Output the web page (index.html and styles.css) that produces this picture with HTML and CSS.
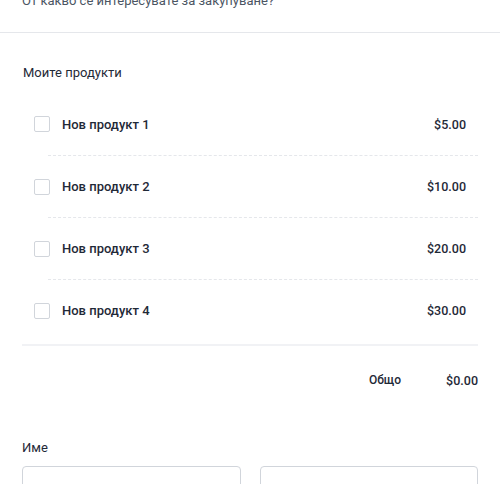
FILE: index.html
```html
<!DOCTYPE html>
<html lang="bg">
<head>
<meta charset="utf-8">
<link rel="stylesheet" href="styles.css">
</head>
<body>
<div class="header">
  <p class="subtitle">От какво се интересувате за закупуване?</p>
</div>
<main class="content">
  <h2 class="section-title">Моите продукти</h2>
  <ul class="products">
    <li class="product"><span class="check"></span><span class="name">Нов продукт 1</span><span class="price">$5.00</span></li>
    <li class="product"><span class="check"></span><span class="name">Нов продукт 2</span><span class="price">$10.00</span></li>
    <li class="product"><span class="check"></span><span class="name">Нов продукт 3</span><span class="price">$20.00</span></li>
    <li class="product"><span class="check"></span><span class="name">Нов продукт 4</span><span class="price">$30.00</span></li>
  </ul>
  <div class="total"><span class="total-label">Общо</span><span class="total-value">$0.00</span></div>
  <label class="field-label">Име</label>
  <div class="inputs">
    <div class="input"></div>
    <div class="input"></div>
  </div>
</main>
</body>
</html>
```
FILE: styles.css
```css
html, body {
  margin: 0;
  padding: 0;
  background: #ffffff;
  font-family: Roboto, "Noto Sans", sans-serif;
  color: #1f2937;
}
body { overflow: hidden; height: 484px; }
.header {
  border-bottom: 1px solid #e5e7eb;
  height: 32px;
  overflow: hidden;
}
.subtitle {
  margin: -9px 0 0 22px;
  font-size: 13px;
  line-height: 20px;
  color: #4b5563;
}
.content {
  padding: 0 22px;
}
.section-title {
  margin: 30px 0 0 1px;
  font-size: 13px;
  font-weight: 400;
  line-height: 20px;
  color: #1f2937;
}
.products {
  list-style: none;
  margin: 0;
  padding: 0 0 3px;
  margin-top: 10px;
  border-bottom: 2px solid #f1f2f5;
}
.product {
  display: flex;
  align-items: center;
  height: 62px;
  padding: 0 12px;
}
.product + .product {
  border-top: 1px dashed #e5e7eb;
  margin-left: 26px;
  padding-left: 0;
  height: 61px;
}
.check {
  width: 14px;
  height: 14px;
  border: 1px solid #d1d5db;
  border-radius: 2px;
  flex: none;
  margin-right: 12px;
}
.product + .product .check { margin-left: -14px; }
.name {
  font-size: 13px;
  font-weight: 500;
  flex: 1;
  color: #1f2937;
}
.price {
  font-size: 12.5px;
  font-weight: 500;
}
.total {
  display: flex;
  justify-content: flex-end;
  align-items: center;
  gap: 45px;
  height: 68px;
  font-size: 12px;
  font-weight: 500;
}
.total-value { font-size: 12.5px; }
.field-label {
  display: block;
  margin-top: 24px;
  font-size: 13px;
  line-height: 20px;
}
.inputs {
  display: grid;
  grid-template-columns: 1fr 1fr;
  gap: 19px;
  margin-top: 8px;
}
.input {
  height: 40px;
  border: 1px solid #d1d5db;
  border-radius: 4px;
}
```
